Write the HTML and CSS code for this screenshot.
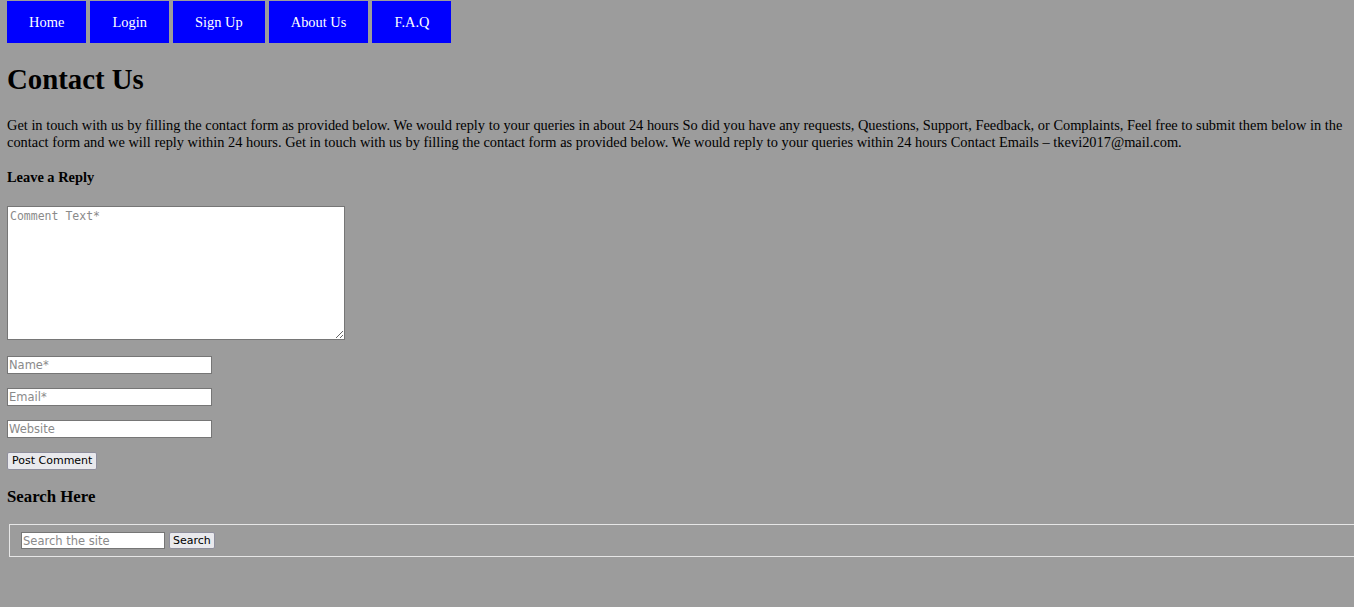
FILE: index.html
```html
<!DOCTYPE html>
<html lang="en">
<head>
<meta charset="utf-8">
<title>Contact Us</title>
<link rel="stylesheet" href="styles.css">
</head>
<body>
<nav class="nav">
  <a class="nav-link" href="#">Home</a>
  <a class="nav-link" href="#">Login</a>
  <a class="nav-link" href="#">Sign Up</a>
  <a class="nav-link" href="#">About Us</a>
  <a class="nav-link" href="#">F.A.Q</a>
</nav>
<main class="content">
  <h1 class="title">Contact Us</h1>
  <p class="intro">Get in touch with us by filling the contact form as provided below. We would reply to your queries in about 24 hours So did you have any requests, Questions, Support, Feedback, or Complaints, Feel free to submit them below in the contact form and we will reply within 24 hours. Get in touch with us by filling the contact form as provided below. We would reply to your queries within 24 hours Contact Emails – tkevi2017@mail.com.</p>
  <h4 class="reply-title">Leave a Reply</h4>
  <form class="comment-form">
    <textarea class="comment-text" placeholder="Comment Text*"></textarea>
    <input class="field field-name" type="text" placeholder="Name*">
    <input class="field" type="text" placeholder="Email*">
    <input class="field" type="text" placeholder="Website">
    <button class="btn" type="button">Post Comment</button>
  </form>
  <h3 class="search-title">Search Here</h3>
  <form class="search-form">
    <fieldset class="search-box">
      <input class="search-input" type="text" placeholder="Search the site">
      <button class="btn btn-search" type="button">Search</button>
    </fieldset>
  </form>
</main>
</body>
</html>
```
FILE: styles.css
```css
html, body {
  background: #9c9c9c;
}
body {
  margin: 0;
  padding: 1px 0 0 7px;
  overflow-x: hidden;
  font-family: "Liberation Serif", "Times New Roman", serif;
  font-size: 14.4px;
  color: #000;
}
.nav {
  display: flex;
  gap: 4px;
}
.nav-link {
  display: block;
  height: 42px;
  line-height: 42px;
  padding: 0 22.1px;
  background: #0000ff;
  color: #fff;
  text-decoration: none;
  font-size: 14.4px;
}
.content {
  display: block;
}
.title {
  font-size: 28.8px;
  font-weight: bold;
  margin: 20px 0 0;
  line-height: 33px;
}
.intro {
  margin: 21px 0 0;
  line-height: 17px;
}
.reply-title {
  font-size: 14.4px;
  font-weight: bold;
  margin: 18px 0 0;
  line-height: 17px;
}
.comment-form {
  display: flex;
  flex-direction: column;
  align-items: flex-start;
  margin-top: 20px;
}
.comment-text {
  box-sizing: border-box;
  width: 338px;
  height: 134px;
  margin: 0;
  padding: 2px;
  border: 1px solid #767676;
  background: #fff;
  font-family: "DejaVu Sans Mono", "Liberation Mono", monospace;
  font-size: 11.5px;
  resize: both;
}
.comment-text::placeholder {
  color: #8a8a8a;
}
.field {
  box-sizing: border-box;
  width: 205px;
  height: 18px;
  margin: 14px 0 0;
  padding: 0 1px;
  border: 1px solid #767676;
  background: #fff;
  font-family: "DejaVu Sans", Verdana, sans-serif;
  font-size: 11.5px;
}
.field-name {
  margin-top: 16px;
}
.field::placeholder,
.search-input::placeholder {
  color: #8a8a8a;
}
.btn {
  box-sizing: border-box;
  height: 18px;
  margin: 14px 0 0;
  padding: 0 4px;
  border: 1px solid #8f8f9d;
  border-radius: 2px;
  background: #e9e9ed;
  color: #000;
  font-family: "DejaVu Sans", Verdana, sans-serif;
  font-size: 11px;
  line-height: 14px;
}
.search-title {
  font-size: 16.8px;
  font-weight: bold;
  margin: 17px 0 0;
  line-height: 20px;
}
.search-form {
  margin: 17px 0 0;
}
.search-box {
  display: flex;
  align-items: center;
  gap: 4px;
  box-sizing: border-box;
  width: calc(100% + 40px);
  height: 33px;
  margin: 0 0 0 2px;
  padding: 0 0 0 11px;
  border: 1px solid #e6e6e6;
}
.search-input {
  box-sizing: border-box;
  width: 144px;
  height: 17px;
  margin: 0;
  padding: 0 1px;
  border: 1px solid #767676;
  background: #fff;
  font-family: "DejaVu Sans", Verdana, sans-serif;
  font-size: 11.5px;
}
.btn-search {
  margin: 0;
  height: 17px;
  padding: 0 3px;
}
```
